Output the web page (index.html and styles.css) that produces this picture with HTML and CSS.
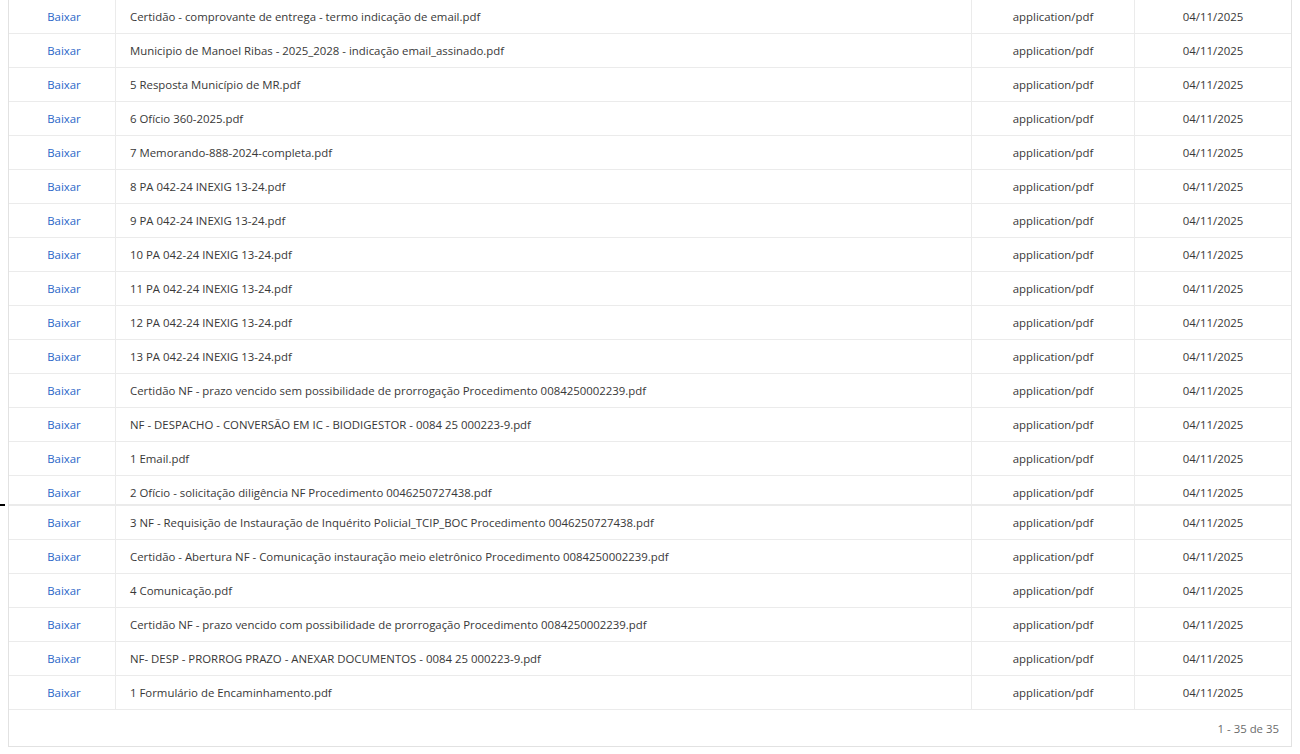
FILE: index.html
```html
<!DOCTYPE html>
<html lang="pt-BR">
<head>
<meta charset="utf-8">
<title>Documentos</title>
<link rel="stylesheet" href="styles.css">
</head>
<body>
<div class="mark"></div>
<div class="grid">
  <div class="row"><div class="cell link">Baixar</div><div class="cell name">Certidão - comprovante de entrega - termo indicação de email.pdf</div><div class="cell center">application/pdf</div><div class="cell center last">04/11/2025</div></div>
  <div class="row"><div class="cell link">Baixar</div><div class="cell name">Municipio de Manoel Ribas - 2025_2028 - indicação email_assinado.pdf</div><div class="cell center">application/pdf</div><div class="cell center last">04/11/2025</div></div>
  <div class="row"><div class="cell link">Baixar</div><div class="cell name">5 Resposta Município de MR.pdf</div><div class="cell center">application/pdf</div><div class="cell center last">04/11/2025</div></div>
  <div class="row"><div class="cell link">Baixar</div><div class="cell name">6 Ofício 360-2025.pdf</div><div class="cell center">application/pdf</div><div class="cell center last">04/11/2025</div></div>
  <div class="row"><div class="cell link">Baixar</div><div class="cell name">7 Memorando-888-2024-completa.pdf</div><div class="cell center">application/pdf</div><div class="cell center last">04/11/2025</div></div>
  <div class="row"><div class="cell link">Baixar</div><div class="cell name">8 PA 042-24 INEXIG 13-24.pdf</div><div class="cell center">application/pdf</div><div class="cell center last">04/11/2025</div></div>
  <div class="row"><div class="cell link">Baixar</div><div class="cell name">9 PA 042-24 INEXIG 13-24.pdf</div><div class="cell center">application/pdf</div><div class="cell center last">04/11/2025</div></div>
  <div class="row"><div class="cell link">Baixar</div><div class="cell name">10 PA 042-24 INEXIG 13-24.pdf</div><div class="cell center">application/pdf</div><div class="cell center last">04/11/2025</div></div>
  <div class="row"><div class="cell link">Baixar</div><div class="cell name">11 PA 042-24 INEXIG 13-24.pdf</div><div class="cell center">application/pdf</div><div class="cell center last">04/11/2025</div></div>
  <div class="row"><div class="cell link">Baixar</div><div class="cell name">12 PA 042-24 INEXIG 13-24.pdf</div><div class="cell center">application/pdf</div><div class="cell center last">04/11/2025</div></div>
  <div class="row"><div class="cell link">Baixar</div><div class="cell name">13 PA 042-24 INEXIG 13-24.pdf</div><div class="cell center">application/pdf</div><div class="cell center last">04/11/2025</div></div>
  <div class="row"><div class="cell link">Baixar</div><div class="cell name">Certidão NF - prazo vencido sem possibilidade de prorrogação Procedimento 0084250002239.pdf</div><div class="cell center">application/pdf</div><div class="cell center last">04/11/2025</div></div>
  <div class="row"><div class="cell link">Baixar</div><div class="cell name">NF - DESPACHO - CONVERSÃO EM IC - BIODIGESTOR - 0084 25 000223-9.pdf</div><div class="cell center">application/pdf</div><div class="cell center last">04/11/2025</div></div>
  <div class="row"><div class="cell link">Baixar</div><div class="cell name">1 Email.pdf</div><div class="cell center">application/pdf</div><div class="cell center last">04/11/2025</div></div>
  <div class="row clipped"><div class="cell link">Baixar</div><div class="cell name">2 Ofício - solicitação diligência NF Procedimento 0046250727438.pdf</div><div class="cell center">application/pdf</div><div class="cell center last">04/11/2025</div></div>
  <div class="row seam"><div class="cell link">Baixar</div><div class="cell name">3 NF - Requisição de Instauração de Inquérito Policial_TCIP_BOC Procedimento 0046250727438.pdf</div><div class="cell center">application/pdf</div><div class="cell center last">04/11/2025</div></div>
  <div class="row"><div class="cell link">Baixar</div><div class="cell name">Certidão - Abertura NF - Comunicação instauração meio eletrônico Procedimento 0084250002239.pdf</div><div class="cell center">application/pdf</div><div class="cell center last">04/11/2025</div></div>
  <div class="row"><div class="cell link">Baixar</div><div class="cell name">4 Comunicação.pdf</div><div class="cell center">application/pdf</div><div class="cell center last">04/11/2025</div></div>
  <div class="row"><div class="cell link">Baixar</div><div class="cell name">Certidão NF - prazo vencido com possibilidade de prorrogação Procedimento 0084250002239.pdf</div><div class="cell center">application/pdf</div><div class="cell center last">04/11/2025</div></div>
  <div class="row"><div class="cell link">Baixar</div><div class="cell name">NF- DESP - PRORROG PRAZO - ANEXAR DOCUMENTOS - 0084 25 000223-9.pdf</div><div class="cell center">application/pdf</div><div class="cell center last">04/11/2025</div></div>
  <div class="row"><div class="cell link">Baixar</div><div class="cell name">1 Formulário de Encaminhamento.pdf</div><div class="cell center">application/pdf</div><div class="cell center last">04/11/2025</div></div>
  <div class="pager">1 - 35 de 35</div>
</div>
</body>
</html>
```
FILE: styles.css
```css
html, body {
  margin: 0;
  padding: 0;
  background: #ffffff;
}
body {
  padding: 0 8px;
  font-family: "Open Sans", "Noto Sans", "Liberation Sans", sans-serif;
  font-size: 11.4px;
  color: #383838;
  position: relative;
}
.grid {
  margin-top: -1px;
  border: 1px solid #e2e2e2;
  width: 1282px;
}
.row {
  display: grid;
  grid-template-columns: 107px 856px 163px 156px;
  border-bottom: 1px solid #ebebeb;
}
.cell {
  height: 33px;
  box-sizing: border-box;
  padding: 9px 14px 8px;
  line-height: 16px;
  white-space: nowrap;
  overflow: hidden;
  border-right: 1px solid #ebebeb;
}
.row .cell.last {
  border-right: none;
}
.link {
  color: #2a66c8;
  text-align: center;
  padding-left: 16px;
  padding-right: 12px;
}
.center {
  text-align: center;
}
.clipped .cell {
  height: 28px;
}
.seam {
  border-top: 1px solid #ebebeb;
}
.pager {
  height: 36px;
  line-height: 38px;
  text-align: right;
  padding-right: 12px;
  color: #6b6b6b;
}
.mark {
  position: absolute;
  left: 0;
  top: 504px;
  width: 5px;
  height: 2px;
  background: #000;
}
```
